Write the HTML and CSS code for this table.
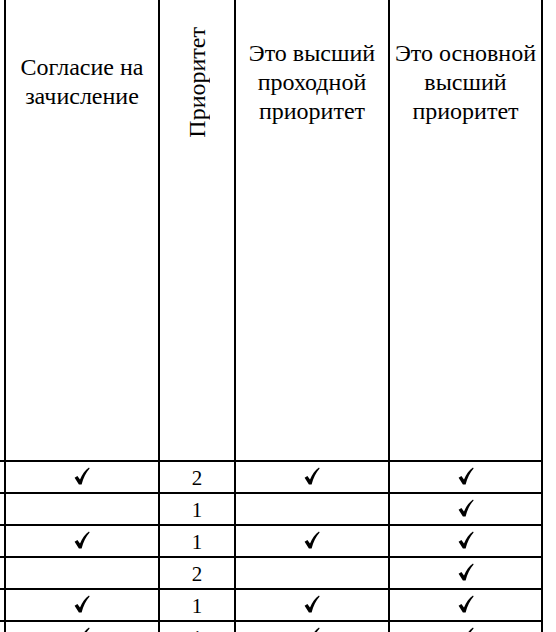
FILE: index.html
```html
<!DOCTYPE html>
<html lang="ru">
<head>
<meta charset="utf-8">
<title>Таблица приоритетов</title>
<link rel="stylesheet" href="styles.css">
</head>
<body>
<table class="grid">
  <colgroup>
    <col class="c-stub">
    <col class="c-wide">
    <col class="c-narrow">
    <col class="c-wide">
    <col class="c-last">
  </colgroup>
  <thead>
    <tr class="head">
      <th class="stub"></th>
      <th><div class="head-text">Согласие на<br>зачисление</div></th>
      <th><div class="head-text"><span class="vertical">Приоритет</span></div></th>
      <th><div class="head-text">Это высший<br>проходной<br>приоритет</div></th>
      <th><div class="head-text">Это основной<br>высший<br>приоритет</div></th>
    </tr>
  </thead>
  <tbody>
    <tr><td class="stub"></td><td><svg class="check" viewBox="0 0 16 18"><path d="M0.6 10.8 L3.4 9 L6 12.4 C8.3 7.3 11 3.4 15 0.5 L15.6 1.4 C12 5.3 9.3 10.5 7.6 17.6 L4.9 17.6 Z"/></svg></td><td>2</td><td><svg class="check" viewBox="0 0 16 18"><path d="M0.6 10.8 L3.4 9 L6 12.4 C8.3 7.3 11 3.4 15 0.5 L15.6 1.4 C12 5.3 9.3 10.5 7.6 17.6 L4.9 17.6 Z"/></svg></td><td><svg class="check" viewBox="0 0 16 18"><path d="M0.6 10.8 L3.4 9 L6 12.4 C8.3 7.3 11 3.4 15 0.5 L15.6 1.4 C12 5.3 9.3 10.5 7.6 17.6 L4.9 17.6 Z"/></svg></td></tr>
    <tr><td class="stub"></td><td></td><td>1</td><td></td><td><svg class="check" viewBox="0 0 16 18"><path d="M0.6 10.8 L3.4 9 L6 12.4 C8.3 7.3 11 3.4 15 0.5 L15.6 1.4 C12 5.3 9.3 10.5 7.6 17.6 L4.9 17.6 Z"/></svg></td></tr>
    <tr><td class="stub"></td><td><svg class="check" viewBox="0 0 16 18"><path d="M0.6 10.8 L3.4 9 L6 12.4 C8.3 7.3 11 3.4 15 0.5 L15.6 1.4 C12 5.3 9.3 10.5 7.6 17.6 L4.9 17.6 Z"/></svg></td><td>1</td><td><svg class="check" viewBox="0 0 16 18"><path d="M0.6 10.8 L3.4 9 L6 12.4 C8.3 7.3 11 3.4 15 0.5 L15.6 1.4 C12 5.3 9.3 10.5 7.6 17.6 L4.9 17.6 Z"/></svg></td><td><svg class="check" viewBox="0 0 16 18"><path d="M0.6 10.8 L3.4 9 L6 12.4 C8.3 7.3 11 3.4 15 0.5 L15.6 1.4 C12 5.3 9.3 10.5 7.6 17.6 L4.9 17.6 Z"/></svg></td></tr>
    <tr><td class="stub"></td><td></td><td>2</td><td></td><td><svg class="check" viewBox="0 0 16 18"><path d="M0.6 10.8 L3.4 9 L6 12.4 C8.3 7.3 11 3.4 15 0.5 L15.6 1.4 C12 5.3 9.3 10.5 7.6 17.6 L4.9 17.6 Z"/></svg></td></tr>
    <tr><td class="stub"></td><td><svg class="check" viewBox="0 0 16 18"><path d="M0.6 10.8 L3.4 9 L6 12.4 C8.3 7.3 11 3.4 15 0.5 L15.6 1.4 C12 5.3 9.3 10.5 7.6 17.6 L4.9 17.6 Z"/></svg></td><td>1</td><td><svg class="check" viewBox="0 0 16 18"><path d="M0.6 10.8 L3.4 9 L6 12.4 C8.3 7.3 11 3.4 15 0.5 L15.6 1.4 C12 5.3 9.3 10.5 7.6 17.6 L4.9 17.6 Z"/></svg></td><td><svg class="check" viewBox="0 0 16 18"><path d="M0.6 10.8 L3.4 9 L6 12.4 C8.3 7.3 11 3.4 15 0.5 L15.6 1.4 C12 5.3 9.3 10.5 7.6 17.6 L4.9 17.6 Z"/></svg></td></tr>
    <tr><td class="stub"></td><td><svg class="check" viewBox="0 0 16 18"><path d="M0.6 10.8 L3.4 9 L6 12.4 C8.3 7.3 11 3.4 15 0.5 L15.6 1.4 C12 5.3 9.3 10.5 7.6 17.6 L4.9 17.6 Z"/></svg></td><td>1</td><td><svg class="check" viewBox="0 0 16 18"><path d="M0.6 10.8 L3.4 9 L6 12.4 C8.3 7.3 11 3.4 15 0.5 L15.6 1.4 C12 5.3 9.3 10.5 7.6 17.6 L4.9 17.6 Z"/></svg></td><td><svg class="check" viewBox="0 0 16 18"><path d="M0.6 10.8 L3.4 9 L6 12.4 C8.3 7.3 11 3.4 15 0.5 L15.6 1.4 C12 5.3 9.3 10.5 7.6 17.6 L4.9 17.6 Z"/></svg></td></tr>
  </tbody>
</table>
</body>
</html>
```

FILE: styles.css
```css
html, body {
  margin: 0;
  padding: 0;
  background: #fff;
  overflow: hidden;
}

body {
  width: 556px;
  height: 632px;
  font-family: "Liberation Serif", "Times New Roman", "DejaVu Serif", serif;
  color: #000;
}

.grid {
  border-collapse: collapse;
  table-layout: fixed;
  width: 543px;
  font-family: "Liberation Serif", "Times New Roman", "DejaVu Serif", serif;
}

.c-stub { width: 5px; }
.c-wide { width: 154px; }
.c-narrow { width: 76px; }
.c-last { width: 153px; }

.grid th,
.grid td {
  border: 2px solid #000;
  padding: 0;
  text-align: center;
}

.grid th {
  border-top: none;
  font-weight: normal;
  font-size: 24px;
  line-height: 29px;
  vertical-align: top;
}

.grid .stub {
  border-left: none;
}

.head {
  height: 461px;
}

.head-text {
  height: 164px;
  display: flex;
  align-items: center;
  justify-content: center;
  white-space: nowrap;
}

.vertical {
  writing-mode: vertical-rl;
  transform: rotate(180deg);
  line-height: 26px;
}

.grid td {
  height: 32px;
  font-size: 21px;
  line-height: 22px;
  vertical-align: top;
  padding-top: 5px;
  box-sizing: border-box;
}

.check {
  width: 16px;
  height: 18px;
  fill: #000;
  display: inline-block;
  vertical-align: top;
}
```
